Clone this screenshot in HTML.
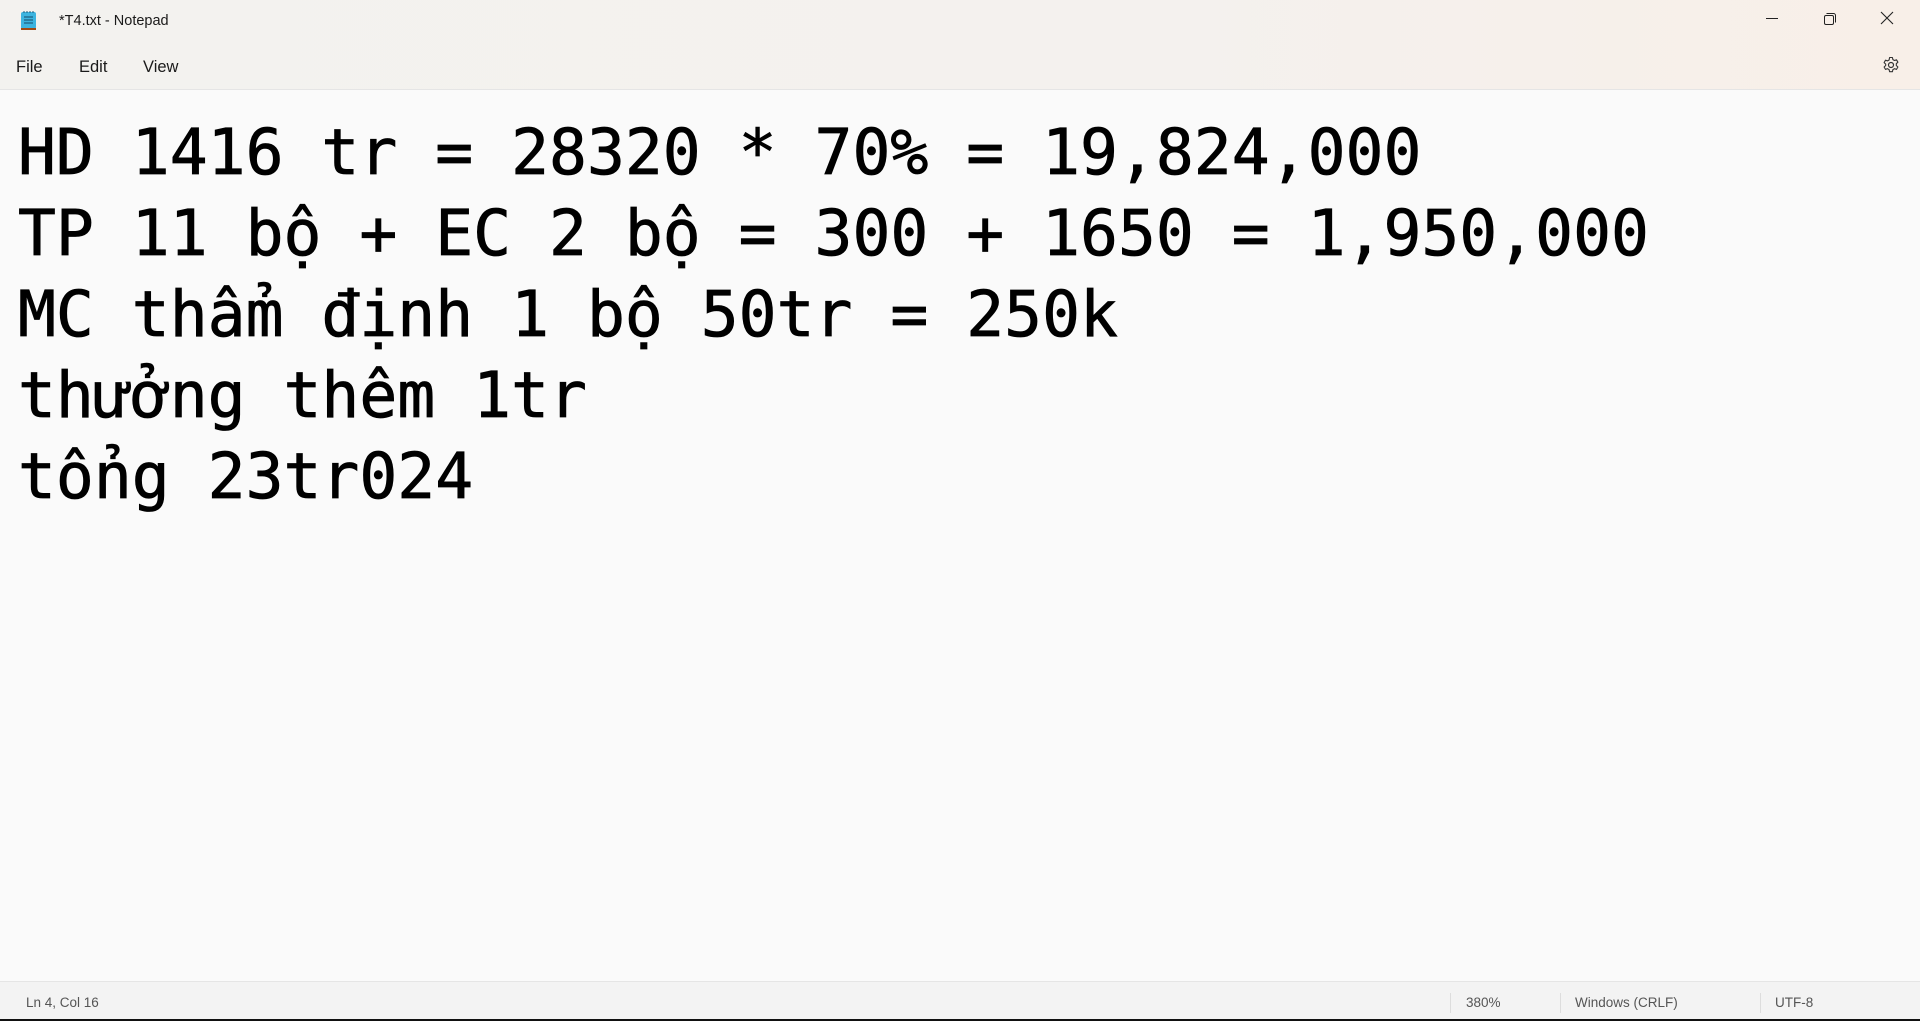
<!DOCTYPE html>
<html><head><meta charset="utf-8"><style>
html,body{margin:0;padding:0;width:1920px;height:1021px;overflow:hidden;background:#fafafa;font-family:"Segoe UI","Liberation Sans",sans-serif;}
#top{position:absolute;left:0;top:0;width:1920px;height:89px;background:linear-gradient(90deg,#f3f2ef 0%,#f4f1ee 60%,#f8efe8 100%);border-bottom:1px solid #e5e5e5;}
.t{position:absolute;font-size:15px;color:#1a1a1a;white-space:nowrap;}
#ed{position:absolute;left:18px;top:112px;font-family:"DejaVu Sans Mono","Liberation Mono",monospace;font-size:63px;line-height:81px;color:#000;white-space:pre;-webkit-text-stroke:0.8px #000;}
#st{position:absolute;left:0;top:981px;width:1920px;height:38px;background:#f3f3f3;border-top:1px solid #e5e5e5;}
#bl{position:absolute;left:0;top:1019px;width:1920px;height:2px;background:#111;}
.s{position:absolute;top:13px;font-size:13.5px;color:#555;}
.sep{position:absolute;top:11px;width:1px;height:20px;background:#ddd;}
</style></head><body>
<div id="top">
<svg style="position:absolute;left:20px;top:9px" width="18" height="24" viewBox="0 0 18 24"><rect x="1" y="3" width="15" height="17" rx="2" fill="#3cb4e0"/><rect x="1" y="19" width="15" height="2" fill="#a04a14"/><path d="M4 8h9M4 11h9M4 14h9" stroke="#1e5f80" stroke-width="1.3"/><path d="M4 2v2M7 2v2M10 2v2M13 2v2" stroke="#1e5f80" stroke-width="1"/></svg>
<div class="t" style="left:59px;top:13px;font-size:14.5px">*T4.txt - Notepad</div>
<div class="t" style="left:16px;top:58px;font-size:16.5px">File</div>
<div class="t" style="left:79px;top:58px;font-size:16.5px">Edit</div>
<div class="t" style="left:143px;top:58px;font-size:16.5px">View</div>
<svg style="position:absolute;left:1764px;top:9px" width="140" height="20"><path d="M2 9.5h12" stroke="#222" stroke-width="1"/><rect x="60.5" y="6.5" width="9" height="9" fill="none" stroke="#222" rx="1.5"/><path d="M62.5 4.5h7a2 2 0 0 1 2 2v7" fill="none" stroke="#222"/><path d="M117 3l12 12M129 3l-12 12" stroke="#222" stroke-width="1.1"/></svg>
<svg style="position:absolute;left:1882px;top:56px" width="18" height="18" viewBox="0 0 18 18"><circle cx="9" cy="9" r="2.5" fill="none" stroke="#333" stroke-width="1.2"/><path d="M7.6 1.5h2.8l.5 2.1 1.6.9 2-.7 1.4 2.4-1.6 1.5v1.8l1.6 1.5-1.4 2.4-2-.7-1.6.9-.5 2.1H7.6l-.5-2.1-1.6-.9-2 .7-1.4-2.4 1.6-1.5V8.1L2.1 6.6l1.4-2.4 2 .7 1.6-.9z" fill="none" stroke="#333" stroke-width="1.1" stroke-linejoin="round"/></svg>
</div>
<div id="ed">HD 1416 tr = 28320 * 70% = 19,824,000
TP 11 bộ + EC 2 bộ = 300 + 1650 = 1,950,000
MC thẩm định 1 bộ 50tr = 250k
thưởng thêm 1tr
tổng 23tr024</div>
<div id="st">
<div class="s" style="left:26px">Ln 4, Col 16</div>
<div class="sep" style="left:1450px"></div>
<div class="s" style="left:1466px">380%</div>
<div class="sep" style="left:1560px"></div>
<div class="s" style="left:1575px">Windows (CRLF)</div>
<div class="sep" style="left:1760px"></div>
<div class="s" style="left:1775px">UTF-8</div>
</div>
<div id="bl"></div>
</body></html>
